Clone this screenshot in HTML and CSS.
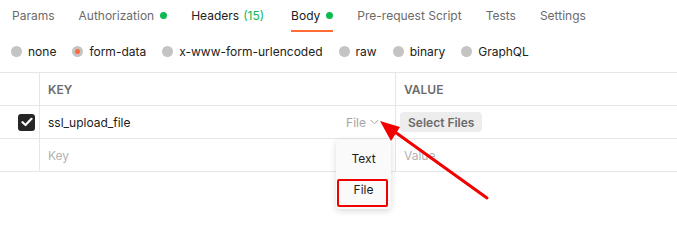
FILE: index.html
```html
<!DOCTYPE html>
<html lang="en">
<head>
    <meta charset="UTF-8">
    <title>Request Body</title>
    <link rel="stylesheet" href="styles.css">
</head>
<body>
    <div class="tabs">
        <div class="tab">Params</div>
        <div class="tab">Authorization <span class="dot"></span></div>
        <div class="tab tab-dark">Headers <span class="count">(15)</span></div>
        <div class="tab active">Body <span class="dot"></span></div>
        <div class="tab">Pre-request Script</div>
        <div class="tab">Tests</div>
        <div class="tab">Settings</div>
    </div>

    <div class="body-types">
        <label class="radio"><span class="circle"></span>none</label>
        <label class="radio selected"><span class="circle"></span>form-data</label>
        <label class="radio"><span class="circle"></span>x-www-form-urlencoded</label>
        <label class="radio"><span class="circle"></span>raw</label>
        <label class="radio"><span class="circle"></span>binary</label>
        <label class="radio"><span class="circle"></span>GraphQL</label>
    </div>

    <div class="kv-table">
        <div class="kv-row kv-head">
            <div class="cell cell-check"></div>
            <div class="cell cell-key">KEY</div>
            <div class="cell cell-value">VALUE</div>
        </div>
        <div class="kv-row">
            <div class="cell cell-check">
                <span class="checkbox">
                    <svg width="12" height="10" viewBox="0 0 12 10"><path d="M1.5 5.2 L4.5 8 L10.5 1.8" fill="none" stroke="#fff" stroke-width="2.2" stroke-linecap="round" stroke-linejoin="round"/></svg>
                </span>
            </div>
            <div class="cell cell-key">
                <span class="key-text">ssl_upload_file</span>
                <span class="type-select">File
                    <svg width="9" height="6" viewBox="0 0 9 6"><path d="M0.5 0.8 L4.5 4.8 L8.5 0.8" fill="none" stroke="#a6a6a6" stroke-width="1"/></svg>
                </span>
                <div class="type-menu">
                    <div class="menu-item">Text</div>
                    <div class="menu-item">File</div>
                    <div class="highlight-box"></div>
                </div>
            </div>
            <div class="cell cell-value">
                <button class="select-files">Select Files</button>
            </div>
        </div>
        <div class="kv-row">
            <div class="cell cell-check"></div>
            <div class="cell cell-key placeholder">Key</div>
            <div class="cell cell-value placeholder">Value</div>
        </div>
    </div>

    <svg class="annotation-arrow" width="677" height="250" viewBox="0 0 677 250">
        <line x1="487" y1="198" x2="395" y2="132" stroke="#f20000" stroke-width="3" stroke-linecap="round"/>
        <polygon points="380,121 400,127 391,141" fill="#f20000"/>
    </svg>
</body>
</html>
```

FILE: styles.css
```css
body {
    margin: 0;
    font-family: Inter, "Noto Sans", Arial, sans-serif;
    font-size: 12px;
    color: #212121;
    background-color: #fff;
    position: relative;
    width: 677px;
    height: 250px;
    overflow: hidden;
}

.tabs {
    display: flex;
    height: 32px;
    padding-left: 12px;
    gap: 24px;
}

.tab {
    position: relative;
    display: flex;
    align-items: center;
    height: 32px;
    padding-bottom: 1px;
    box-sizing: border-box;
    color: #6b6b6b;
    white-space: nowrap;
}

.tab-dark,
.tab.active {
    color: #212121;
}

.tab.active::after {
    content: "";
    position: absolute;
    left: 0;
    right: 0;
    bottom: 0;
    height: 2px;
    background-color: #ff6c37;
}

.dot {
    display: inline-block;
    width: 7px;
    height: 7px;
    margin-left: 6px;
    border-radius: 50%;
    background-color: #0cbb52;
}

.count {
    margin-left: 4px;
    margin-right: 3px;
    color: #0cbb52;
}

.body-types {
    display: flex;
    align-items: center;
    height: 38px;
    margin-bottom: 2px;
    padding-left: 11px;
    gap: 16px;
}

.radio {
    display: flex;
    align-items: center;
    gap: 6px;
    color: #212121;
}

.circle {
    position: relative;
    width: 11px;
    height: 11px;
    border-radius: 50%;
    background-color: #c4c4c4;
}

.radio.selected .circle::after {
    content: "";
    position: absolute;
    left: 3px;
    top: 3px;
    width: 5px;
    height: 5px;
    border-radius: 50%;
    background-color: #ff6c37;
}

.kv-table {
    border-top: 1px solid #e6e6e6;
}

.kv-row {
    display: grid;
    grid-template-columns: 40px 356px 1fr;
    height: 33px;
    border-bottom: 1px solid #e6e6e6;
    box-sizing: border-box;
}

.cell {
    display: flex;
    align-items: center;
    padding: 0 8px;
    border-right: 1px solid #e6e6e6;
}

.cell-value {
    border-right: none;
}

.cell-key {
    position: relative;
}

.kv-head .cell {
    font-size: 12px;
    font-weight: 600;
    color: #6b6b6b;
}

.cell-check {
    justify-content: flex-end;
    padding: 0 4px 0 0;
}

.checkbox {
    display: flex;
    align-items: center;
    justify-content: center;
    width: 17px;
    height: 17px;
    border-radius: 3px;
    background-color: #262626;
}

.key-text {
    flex: 1;
}

.type-select {
    display: flex;
    align-items: center;
    gap: 4px;
    margin-right: 8px;
    color: #a6a6a6;
}

.placeholder {
    color: #b3b3b3;
}

.select-files {
    font-family: inherit;
    font-size: 12px;
    font-weight: 600;
    color: #6b6b6b;
    background-color: #ededed;
    border: none;
    border-radius: 4px;
    height: 20px;
    padding: 0 8px;
    margin-left: -4px;
}

.type-menu {
    position: absolute;
    left: 296px;
    top: 33px;
    width: 55px;
    padding: 4px 0;
    background-color: #fafafa;
    border-radius: 4px;
    box-shadow: 0 2px 6px rgba(0,0,0,0.15);
    z-index: 2;
}

.menu-item {
    height: 31px;
    display: flex;
    align-items: center;
    justify-content: center;
    color: #212121;
}

.highlight-box {
    position: absolute;
    left: 1px;
    top: 40px;
    width: 47px;
    height: 24px;
    border: 2px solid #f20000;
    border-radius: 2px;
}

.annotation-arrow {
    position: absolute;
    left: 0;
    top: 0;
    z-index: 3;
}
```
